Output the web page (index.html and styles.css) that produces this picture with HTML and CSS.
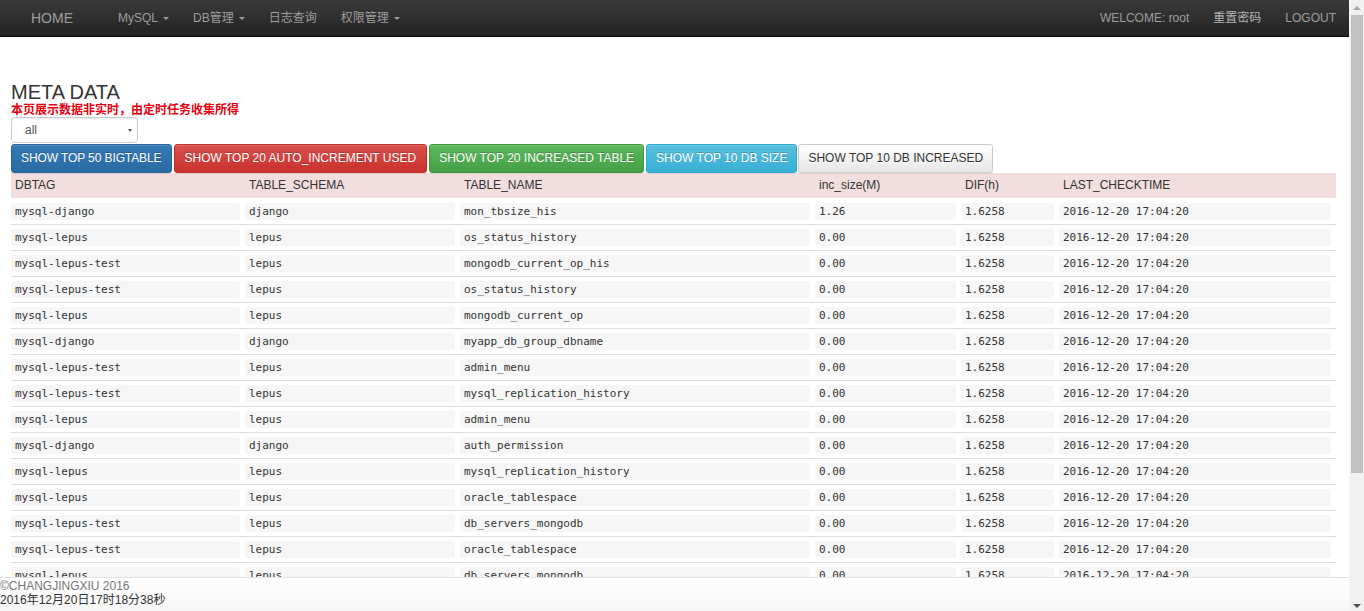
FILE: index.html
```html
<!DOCTYPE html>
<html lang="zh-CN">
<head>
<meta charset="utf-8">
<title>META DATA</title>
<link rel="stylesheet" href="styles.css">
</head>
<body>
<nav class="navbar">
  <div class="nav-group">
    <a class="brand" href="#">HOME</a>
    <a class="nav-link" href="#">MySQL<span class="caret"></span></a>
    <a class="nav-link" href="#">DB管理<span class="caret"></span></a>
    <a class="nav-link" href="#">日志查询</a>
    <a class="nav-link" href="#">权限管理<span class="caret"></span></a>
  </div>
  <div class="nav-group">
    <a class="nav-link" href="#">WELCOME: root</a>
    <a class="nav-link nav-light" href="#">重置密码</a>
    <a class="nav-link" href="#">LOGOUT</a>
  </div>
</nav>

<main class="page">
  <h3 class="title">META DATA</h3>
  <p class="notice">本页展示数据非实时，由定时任务收集所得</p>
  <div class="select-wrap">
    <select class="db-select"><option>all</option></select>
  </div>
  <div class="btn-row">
    <button class="btn btn-primary">SHOW TOP 50 BIGTABLE</button>
    <button class="btn btn-danger">SHOW TOP 20 AUTO_INCREMENT USED</button>
    <button class="btn btn-success">SHOW TOP 20 INCREASED TABLE</button>
    <button class="btn btn-info">SHOW TOP 10 DB SIZE</button>
    <button class="btn btn-default">SHOW TOP 10 DB INCREASED</button>
  </div>
  <table class="meta-table">
    <colgroup>
      <col class="c1"><col class="c2"><col class="c3"><col class="c4"><col class="c5"><col class="c6">
    </colgroup>
    <thead>
      <tr><th>DBTAG</th><th>TABLE_SCHEMA</th><th>TABLE_NAME</th><th>inc_size(M)</th><th>DIF(h)</th><th>LAST_CHECKTIME</th></tr>
    </thead>
    <tbody>
      <tr><td><span class="cell">mysql-django</span></td><td><span class="cell">django</span></td><td><span class="cell">mon_tbsize_his</span></td><td><span class="cell">1.26</span></td><td><span class="cell">1.6258</span></td><td><span class="cell">2016-12-20 17:04:20</span></td></tr>
      <tr><td><span class="cell">mysql-lepus</span></td><td><span class="cell">lepus</span></td><td><span class="cell">os_status_history</span></td><td><span class="cell">0.00</span></td><td><span class="cell">1.6258</span></td><td><span class="cell">2016-12-20 17:04:20</span></td></tr>
      <tr><td><span class="cell">mysql-lepus-test</span></td><td><span class="cell">lepus</span></td><td><span class="cell">mongodb_current_op_his</span></td><td><span class="cell">0.00</span></td><td><span class="cell">1.6258</span></td><td><span class="cell">2016-12-20 17:04:20</span></td></tr>
      <tr><td><span class="cell">mysql-lepus-test</span></td><td><span class="cell">lepus</span></td><td><span class="cell">os_status_history</span></td><td><span class="cell">0.00</span></td><td><span class="cell">1.6258</span></td><td><span class="cell">2016-12-20 17:04:20</span></td></tr>
      <tr><td><span class="cell">mysql-lepus</span></td><td><span class="cell">lepus</span></td><td><span class="cell">mongodb_current_op</span></td><td><span class="cell">0.00</span></td><td><span class="cell">1.6258</span></td><td><span class="cell">2016-12-20 17:04:20</span></td></tr>
      <tr><td><span class="cell">mysql-django</span></td><td><span class="cell">django</span></td><td><span class="cell">myapp_db_group_dbname</span></td><td><span class="cell">0.00</span></td><td><span class="cell">1.6258</span></td><td><span class="cell">2016-12-20 17:04:20</span></td></tr>
      <tr><td><span class="cell">mysql-lepus-test</span></td><td><span class="cell">lepus</span></td><td><span class="cell">admin_menu</span></td><td><span class="cell">0.00</span></td><td><span class="cell">1.6258</span></td><td><span class="cell">2016-12-20 17:04:20</span></td></tr>
      <tr><td><span class="cell">mysql-lepus-test</span></td><td><span class="cell">lepus</span></td><td><span class="cell">mysql_replication_history</span></td><td><span class="cell">0.00</span></td><td><span class="cell">1.6258</span></td><td><span class="cell">2016-12-20 17:04:20</span></td></tr>
      <tr><td><span class="cell">mysql-lepus</span></td><td><span class="cell">lepus</span></td><td><span class="cell">admin_menu</span></td><td><span class="cell">0.00</span></td><td><span class="cell">1.6258</span></td><td><span class="cell">2016-12-20 17:04:20</span></td></tr>
      <tr><td><span class="cell">mysql-django</span></td><td><span class="cell">django</span></td><td><span class="cell">auth_permission</span></td><td><span class="cell">0.00</span></td><td><span class="cell">1.6258</span></td><td><span class="cell">2016-12-20 17:04:20</span></td></tr>
      <tr><td><span class="cell">mysql-lepus</span></td><td><span class="cell">lepus</span></td><td><span class="cell">mysql_replication_history</span></td><td><span class="cell">0.00</span></td><td><span class="cell">1.6258</span></td><td><span class="cell">2016-12-20 17:04:20</span></td></tr>
      <tr><td><span class="cell">mysql-lepus</span></td><td><span class="cell">lepus</span></td><td><span class="cell">oracle_tablespace</span></td><td><span class="cell">0.00</span></td><td><span class="cell">1.6258</span></td><td><span class="cell">2016-12-20 17:04:20</span></td></tr>
      <tr><td><span class="cell">mysql-lepus-test</span></td><td><span class="cell">lepus</span></td><td><span class="cell">db_servers_mongodb</span></td><td><span class="cell">0.00</span></td><td><span class="cell">1.6258</span></td><td><span class="cell">2016-12-20 17:04:20</span></td></tr>
      <tr><td><span class="cell">mysql-lepus-test</span></td><td><span class="cell">lepus</span></td><td><span class="cell">oracle_tablespace</span></td><td><span class="cell">0.00</span></td><td><span class="cell">1.6258</span></td><td><span class="cell">2016-12-20 17:04:20</span></td></tr>
      <tr><td><span class="cell">mysql-lepus</span></td><td><span class="cell">lepus</span></td><td><span class="cell">db_servers_mongodb</span></td><td><span class="cell">0.00</span></td><td><span class="cell">1.6258</span></td><td><span class="cell">2016-12-20 17:04:20</span></td></tr>
      <tr><td><span class="cell">mysql-django</span></td><td><span class="cell">django</span></td><td><span class="cell">django_session</span></td><td><span class="cell">0.00</span></td><td><span class="cell">1.6258</span></td><td><span class="cell">2016-12-20 17:04:20</span></td></tr>
      <tr><td><span class="cell">mysql-lepus</span></td><td><span class="cell">lepus</span></td><td><span class="cell">mysql_status_history</span></td><td><span class="cell">0.00</span></td><td><span class="cell">1.6258</span></td><td><span class="cell">2016-12-20 17:04:20</span></td></tr>
      <tr><td><span class="cell">mysql-lepus-test</span></td><td><span class="cell">lepus</span></td><td><span class="cell">mysql_status_history</span></td><td><span class="cell">0.00</span></td><td><span class="cell">1.6258</span></td><td><span class="cell">2016-12-20 17:04:20</span></td></tr>
      <tr><td><span class="cell">mysql-lepus</span></td><td><span class="cell">lepus</span></td><td><span class="cell">db_servers_mysql</span></td><td><span class="cell">0.00</span></td><td><span class="cell">1.6258</span></td><td><span class="cell">2016-12-20 17:04:20</span></td></tr>
      <tr><td><span class="cell">mysql-lepus-test</span></td><td><span class="cell">lepus</span></td><td><span class="cell">db_servers_mysql</span></td><td><span class="cell">0.00</span></td><td><span class="cell">1.6258</span></td><td><span class="cell">2016-12-20 17:04:20</span></td></tr>
    </tbody>
  </table>
</main>

<footer class="footer">
  <div class="copy">©CHANGJINGXIU 2016</div>
  <div class="clock">2016年12月20日17时18分38秒</div>
</footer>

<div class="scrollbar" aria-hidden="true">
  <span class="sb-arrow sb-up"></span>
  <span class="sb-thumb"></span>
  <span class="sb-track"></span>
  <span class="sb-arrow sb-down"></span>
</div>
</body>
</html>
```

FILE: styles.css
```css
html {
  overflow-y: scroll;
}
body {
  margin: 0 15px 0 0;
  padding-bottom: 60px;
  font-family: "Liberation Sans", Arial, "Noto Sans CJK SC", sans-serif;
  font-size: 12px;
  color: #333;
  background: #fff;
}

/* ---------- navbar ---------- */
.navbar {
  display: flex;
  justify-content: space-between;
  align-items: stretch;
  height: 36px;
  padding: 0 1px 0 16px;
  background: linear-gradient(to bottom, #3a3a3a 0%, #232323 100%);
  border-bottom: 1px solid #080808;
}
.nav-group {
  display: flex;
  align-items: stretch;
}
.navbar a {
  color: #9d9d9d;
  text-decoration: none;
  line-height: 36px;
  white-space: nowrap;
  display: flex;
  align-items: center;
}
.brand {
  font-size: 14px;
  padding: 0 15px;
  margin-right: 18px;
}
.nav-link {
  font-size: 12px;
  padding: 0 12px;
}
.nav-light {
  color: #b4b4b4 !important;
}
.caret {
  display: inline-block;
  width: 0;
  height: 0;
  margin-left: 5px;
  margin-top: 1px;
  border-top: 3px solid #9d9d9d;
  border-left: 3px solid transparent;
  border-right: 3px solid transparent;
}

/* ---------- page ---------- */
.page {
  padding: 44px 13px 0 11px;
}
.title {
  margin: 0;
  font-size: 20px;
  font-weight: normal;
  line-height: 22px;
  color: #333;
}
.notice {
  margin: 0;
  font-size: 12px;
  font-weight: bold;
  line-height: 14px;
  color: #e60012;
}
.select-wrap {
  position: relative;
  width: 127px;
}
.select-wrap::after {
  content: "";
  position: absolute;
  right: 6px;
  top: 12px;
  border-top: 3px solid #555;
  border-left: 2px solid transparent;
  border-right: 2px solid transparent;
}
.db-select {
  -webkit-appearance: none;
  appearance: none;
  display: block;
  width: 127px;
  height: 26px;
  margin: 0;
  padding: 0 0 0 13px;
  border: 1px solid #ccc;
  border-radius: 4px;
  background: #fff;
  box-shadow: inset 0 1px 1px rgba(0, 0, 0, .075);
  font-family: "Liberation Sans", Arial, sans-serif;
  font-size: 12px;
  color: #555;
}

/* ---------- buttons ---------- */
.btn-row {
  display: flex;
  gap: 2px;
  margin-top: 1px;
}
.btn {
  height: 29px;
  margin: 0;
  padding: 0 10px;
  border: 1px solid transparent;
  border-radius: 3px;
  font-family: "Liberation Sans", Arial, sans-serif;
  font-size: 12px;
  line-height: 27px;
  color: #fff;
  text-shadow: 0 -1px 0 rgba(0, 0, 0, .2);
  box-shadow: inset 0 1px 0 rgba(255, 255, 255, .15), 0 1px 1px rgba(0, 0, 0, .075);
  cursor: pointer;
  white-space: nowrap;
}
.btn-primary {
  padding: 0 9px;
  letter-spacing: -0.1px;
  background: linear-gradient(to bottom, #337ab7 0%, #2a6aa3 100%);
  border-color: #2b669a;
}
.btn-danger {
  background: linear-gradient(to bottom, #d9534f 0%, #c9302c 100%);
  border-color: #c12e2a;
}
.btn-success {
  padding: 0 9px;
  background: linear-gradient(to bottom, #5cb85c 0%, #469f46 100%);
  border-color: #419641;
}
.btn-info {
  padding: 0 9px;
  background: linear-gradient(to bottom, #5bc0de 0%, #36afd5 100%);
  border-color: #2aabd2;
}
.btn-default {
  margin-left: -1px;
  padding: 0 9px;
  color: #333;
  text-shadow: 0 1px 0 #fff;
  background: linear-gradient(to bottom, #fff 0%, #e6e6e6 100%);
  border-color: #ccc;
}

/* ---------- table ---------- */
.meta-table {
  width: 100%;
  table-layout: fixed;
  border-collapse: collapse;
}
.c1 { width: 234px; }
.c2 { width: 215px; }
.c3 { width: 355px; }
.c4 { width: 146px; }
.c5 { width: 98px; }
.c6 { width: auto; }
.meta-table th {
  background: #f2dede;
  text-align: left;
  font-weight: normal;
  font-size: 12px;
  line-height: 17px;
  padding: 4px;
  color: #333;
}
.meta-table td {
  padding: 4px 5px 4px 0;
  border-top: 1px solid #ddd;
  vertical-align: top;
}
.meta-table tbody tr:first-child td {
  border-top-color: #fff;
}
.cell {
  display: block;
  padding: 0 4px;
  line-height: 17px;
  background: #f6f6f6;
  border-radius: 2px;
  font-family: "DejaVu Sans Mono", "Liberation Mono", monospace;
  font-size: 11px;
  color: #333;
  white-space: nowrap;
  overflow: hidden;
}

/* ---------- footer ---------- */
.footer {
  position: fixed;
  left: 0;
  right: 15px;
  bottom: 0;
  height: 32px;
  padding: 1px 0 0;
  border-top: 1px solid #e2e2e2;
  background: linear-gradient(to bottom, #fff 0%, #f6f6f6 100%);
  font-size: 12px;
  line-height: 14px;
}
.copy {
  color: #777;
}
.clock {
  color: #333;
}

/* ---------- window scrollbar ---------- */
.scrollbar {
  position: fixed;
  top: 0;
  right: 0;
  bottom: 0;
  width: 15px;
  display: flex;
  flex-direction: column;
  background: #f0f0f0;
  border-left: 1px solid #f7f7f7;
  box-sizing: border-box;
}
.sb-arrow {
  flex: 0 0 15px;
  display: flex;
  align-items: center;
  justify-content: center;
}
.sb-arrow::before {
  content: "";
  width: 0;
  height: 0;
  border-left: 4px solid transparent;
  border-right: 4px solid transparent;
}
.sb-up::before {
  border-bottom: 4px solid #a3a3a3;
}
.sb-down::before {
  border-top: 4px solid #505050;
  margin-top: 4px;
}
.sb-thumb {
  flex: 0 0 458px;
  margin: 0 1px 0 1px;
  background: #c1c1c1;
}
.sb-track {
  flex: 1;
}
```
